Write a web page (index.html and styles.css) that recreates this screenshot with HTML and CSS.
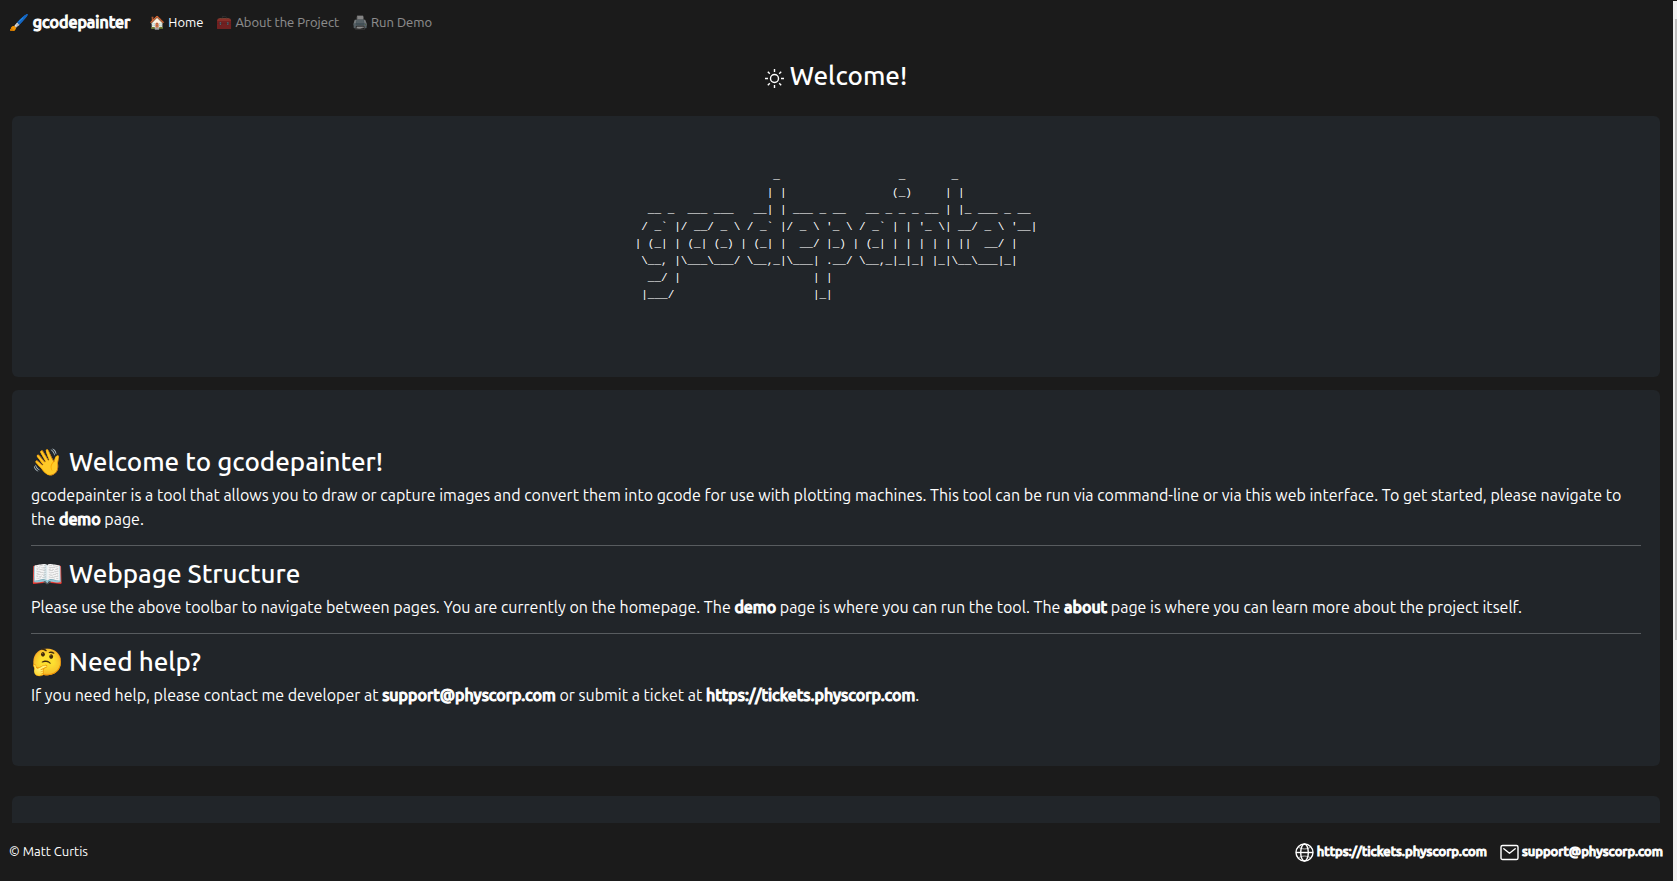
FILE: index.html
```html
<!DOCTYPE html>
<html lang="en">
<head>
<meta charset="utf-8">
<title>gcodepainter</title>
<link rel="stylesheet" href="styles.css">
</head>
<body>
<div class="app">
  <div class="page">
    <nav class="navbar">
      <a class="brand" href="#"><span class="emoji">🖌️</span> gcodepainter</a>
      <a class="nav-link active" href="#"><span class="emoji">🏠</span> Home</a>
      <a class="nav-link" href="#about"><span class="emoji">🧰</span> About the Project</a>
      <a class="nav-link" href="#demo"><span class="emoji">🖨️</span> Run Demo</a>
    </nav>
    <main class="content">
      <h1 class="title">
        <svg class="sun" viewBox="0 0 19 19" fill="none" stroke="currentColor" stroke-width="1.4" aria-hidden="true"><circle cx="9.5" cy="9.5" r="4"/><path d="M9.5 0v3M9.5 16v3M0 9.5h3M16 9.5h3M2.8 2.8l2 2M14.2 14.2l2 2M2.8 16.2l2-2M14.2 4.8l2-2"/></svg>
        Welcome!
      </h1>
      <section class="card banner">
<pre class="ascii">                     _                  _       _
                    | |                (_)     | |
  __ _  ___ ___   __| | ___ _ __   __ _ _ _ __ | |_ ___ _ __
 / _` |/ __/ _ \ / _` |/ _ \ '_ \ / _` | | '_ \| __/ _ \ '__|
| (_| | (_| (_) | (_| |  __/ |_) | (_| | | | | | ||  __/ |
 \__, |\___\___/ \__,_|\___| .__/ \__,_|_|_| |_|\__\___|_|
  __/ |                    | |
 |___/                     |_|</pre>
      </section>
      <section class="card intro">
        <h2><span class="emoji">👋</span> Welcome to gcodepainter!</h2>
        <p>gcodepainter is a tool that allows you to draw or capture images and convert them into gcode for use with plotting machines. This tool can be run via command-line or via this web interface. To get started, please navigate to the <a href="#demo">demo</a> page.</p>
        <hr>
        <h2><span class="emoji">📖</span> Webpage Structure</h2>
        <p>Please use the above toolbar to navigate between pages. You are currently on the homepage. The <a href="#demo">demo</a> page is where you can run the tool. The <a href="#about">about</a> page is where you can learn more about the project itself.</p>
        <hr>
        <h2><span class="emoji">🤔</span> Need help?</h2>
        <p>If you need help, please contact me developer at <a href="#mail">support@physcorp.com</a> or submit a ticket at <a href="#tickets">https://tickets.physcorp.com</a>.</p>
      </section>
      <section class="card next"></section>
    </main>
    <footer class="footer">
      <span>© Matt Curtis</span>
      <div class="contacts">
        <a href="#tickets"><svg class="icon" viewBox="0 0 19 19" fill="none" stroke="currentColor" stroke-width="1.4" aria-hidden="true"><circle cx="9.5" cy="9.5" r="8.5"/><ellipse cx="9.5" cy="9.5" rx="3.8" ry="8.5"/><path d="M1 9.5h17"/><path stroke-width=".7" d="M3.5 4.2c3.5 2.3 8.5 2.3 12 0M3.5 14.8c3.5-2.3 8.5-2.3 12 0"/></svg>https://tickets.physcorp.com</a>
        <a href="#mail"><svg class="icon" viewBox="0 0 19 19" fill="none" stroke="currentColor" stroke-width="1.4" stroke-linecap="round" stroke-linejoin="round" aria-hidden="true"><rect x="1" y="2.5" width="17" height="14" rx="1.6"/><path d="M3.8 5.8l5.7 4.4 5.7-4.4"/></svg>support@physcorp.com</a>
      </div>
    </footer>
  </div>
  <div class="scrollbar"><div class="thumb"></div></div>
</div>
</body>
</html>
```
FILE: styles.css
```css
* {
  box-sizing: border-box;
}

body {
  margin: 0;
  background: #1b1b1b;
  color: #fff;
  font-family: Ubuntu, "Noto Sans", sans-serif;
  font-size: 16px;
  line-height: 24px;
}

a {
  color: inherit;
  text-decoration: none;
}

.app {
  display: flex;
  height: 100vh;
}

.page {
  flex: 1;
  min-width: 0;
  display: flex;
  flex-direction: column;
}

.navbar {
  display: flex;
  align-items: center;
  gap: 13px;
  height: 44px;
  padding: 0 9px;
  font-size: 13px;
}

.brand {
  margin-right: 6px;
  font-size: 16px;
  font-weight: 500;
  -webkit-text-stroke: 1px;
}

.nav-link {
  opacity: 0.5;
}

.nav-link.active {
  opacity: 1;
}

.content {
  flex: 1;
  min-height: 0;
  overflow: hidden;
  padding: 0 13px 0 12px;
}

.title {
  display: flex;
  align-items: center;
  justify-content: center;
  gap: 6px;
  margin: 15px 0 23px;
  font-size: 26px;
  font-weight: 500;
  line-height: 34px;
}

.sun {
  width: 19px;
  height: 19px;
  margin-top: 4px;
}

.card {
  border-radius: 6px;
  background: #212529;
}

.banner {
  display: flex;
  justify-content: center;
  padding: 52px 19px 73px;
}

.ascii {
  margin: 0;
  font-family: "Liberation Mono", monospace;
  font-size: 11px;
  line-height: 17px;
}

.intro {
  margin-top: 13px;
  padding: 55px 19px 59px;
}

.intro h2 {
  margin: 0 0 4px;
  font-size: 26px;
  font-weight: 500;
  line-height: 34px;
}

.intro p {
  margin: 0;
}

.intro p a {
  font-weight: 500;
  -webkit-text-stroke: 1px;
}

.intro hr {
  height: 1px;
  margin: 14px 0 11px;
  border: 0;
  background: #585c5f;
}

.next {
  height: 300px;
  margin-top: 30px;
}

.footer {
  display: flex;
  align-items: center;
  justify-content: space-between;
  height: 58px;
  padding: 0 10px 2px 9px;
  font-size: 13px;
}

.contacts {
  display: flex;
  gap: 13px;
  font-weight: 500;
  -webkit-text-stroke: 1px;
}

.contacts a {
  display: flex;
  align-items: center;
  gap: 3px;
}

.icon {
  width: 19px;
  height: 19px;
  margin-top: 2px;
}

.scrollbar {
  width: 4px;
  padding: 18px 0 0 2px;
  border-top: 1px solid #1b1b1b;
  background: #f1f1f1;
}

.thumb {
  height: 72%;
  background: #c1c1c1;
}
```
